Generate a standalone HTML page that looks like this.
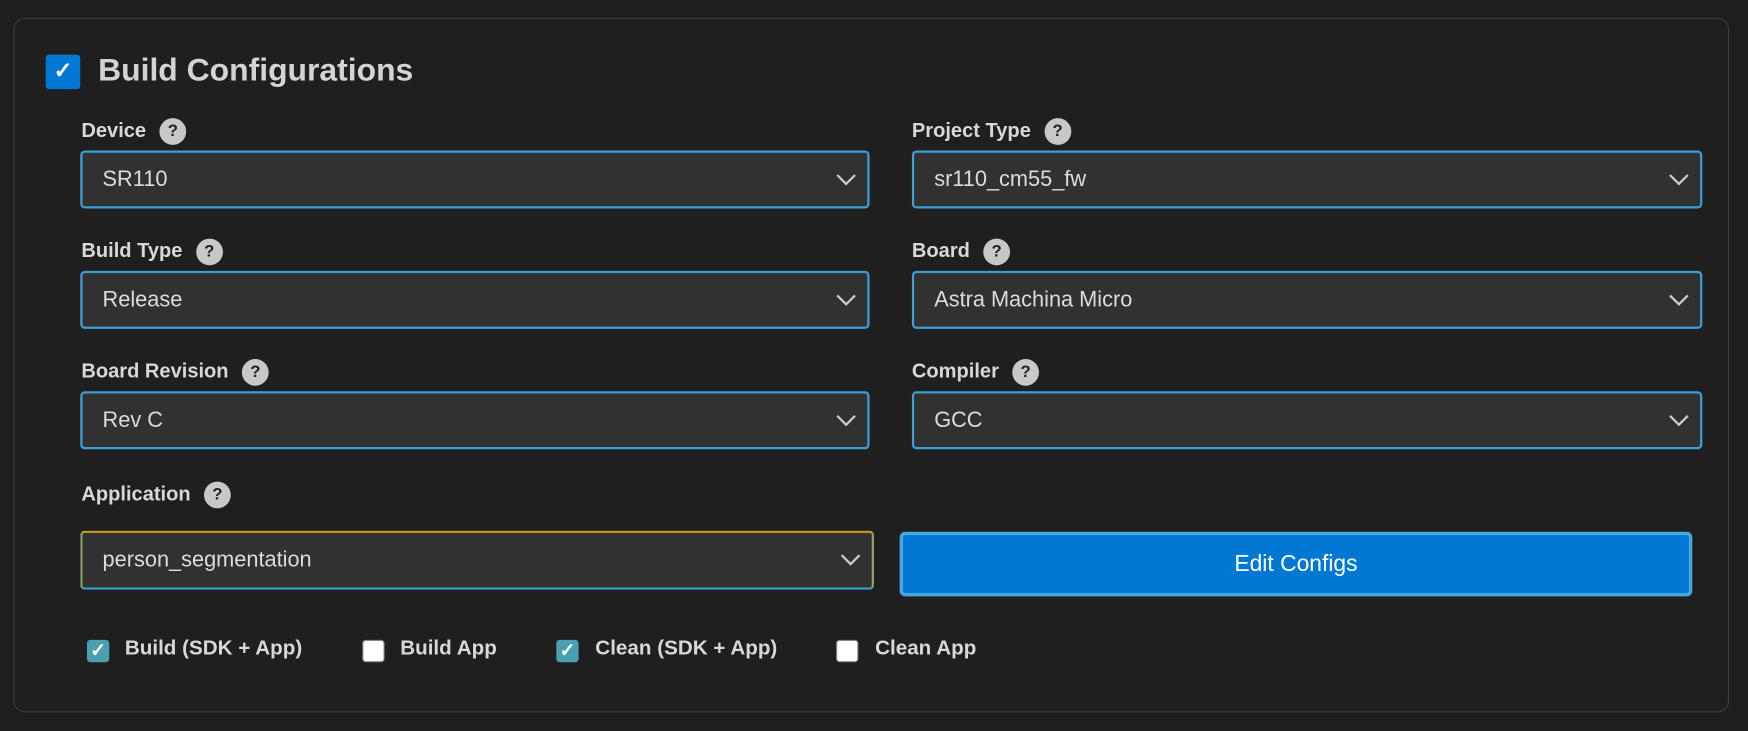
<!DOCTYPE html>
<html><head><style>
body{margin:0;width:1748px;height:731px;background:#1e1e1e;font-family:"Liberation Sans",sans-serif;overflow:hidden;position:relative}
#w{position:absolute;left:0;top:0;width:1568px;height:656px;transform:scale(1.1148);transform-origin:0 0}
.panel{position:absolute;left:12px;top:16px;width:1537px;height:621px;border:1px solid #3c3c3c;border-radius:10px;background:#1f1f1f}
.abs{position:absolute}
.title{left:88px;top:47px;font-size:28.6px;line-height:32px;font-weight:bold;color:#d4d4d4}
.tcb{left:41px;top:49px;width:31px;height:31px;background:#0078d4;border-radius:3px;color:#fff;font-size:20px;font-weight:bold;text-align:center;line-height:31px}
.lbl{font-size:18px;font-weight:bold;color:#d8d8d8}
.q{display:inline-block;width:24px;height:24px;border-radius:50%;background:#c8c8c8;color:#222;font-size:15px;font-weight:bold;text-align:center;line-height:24px;margin-left:12px;vertical-align:middle}
.sel{box-sizing:border-box;height:52px;border:2px solid #3ca0d8;border-radius:4px;background:#313131;color:#dcdcdc;font-size:19.5px;padding-left:18px;line-height:48px}
.sel svg{position:absolute;right:10px;top:18px}
.btn{left:807px;top:477px;width:711px;height:58px;box-sizing:border-box;background:#0078d4;border:3px solid #4aa8dc;border-radius:5px;color:#fff;font-size:20.5px;text-align:center;line-height:52px}
.cb{width:20px;height:20px;border-radius:3px;box-sizing:border-box}
.cbl{font-size:18.5px;font-weight:bold;color:#d8d8d8}
</style></head><body><div id="w">
<div class="panel"></div>
<div class="abs tcb">✓</div>
<div class="abs title">Build Configurations</div>

<div class="abs lbl" style="left:73px;top:106px">Device<span class="q">?</span></div>
<div class="abs sel" style="left:72px;top:135px;width:708px">SR110<svg width="18" height="12"><path d="M1 2 L9 10 L17 2" stroke="#ccc" stroke-width="2" fill="none"/></svg></div>
<div class="abs lbl" style="left:818px;top:106px">Project Type<span class="q">?</span></div>
<div class="abs sel" style="left:818px;top:135px;width:709px">sr110_cm55_fw<svg width="18" height="12"><path d="M1 2 L9 10 L17 2" stroke="#ccc" stroke-width="2" fill="none"/></svg></div>

<div class="abs lbl" style="left:73px;top:214px">Build Type<span class="q">?</span></div>
<div class="abs sel" style="left:72px;top:243px;width:708px">Release<svg width="18" height="12"><path d="M1 2 L9 10 L17 2" stroke="#ccc" stroke-width="2" fill="none"/></svg></div>
<div class="abs lbl" style="left:818px;top:214px">Board<span class="q">?</span></div>
<div class="abs sel" style="left:818px;top:243px;width:709px">Astra Machina Micro<svg width="18" height="12"><path d="M1 2 L9 10 L17 2" stroke="#ccc" stroke-width="2" fill="none"/></svg></div>

<div class="abs lbl" style="left:73px;top:322px">Board Revision<span class="q">?</span></div>
<div class="abs sel" style="left:72px;top:351px;width:708px">Rev C<svg width="18" height="12"><path d="M1 2 L9 10 L17 2" stroke="#ccc" stroke-width="2" fill="none"/></svg></div>
<div class="abs lbl" style="left:818px;top:322px">Compiler<span class="q">?</span></div>
<div class="abs sel" style="left:818px;top:351px;width:709px">GCC<svg width="18" height="12"><path d="M1 2 L9 10 L17 2" stroke="#ccc" stroke-width="2" fill="none"/></svg></div>

<div class="abs lbl" style="left:73px;top:432px">Application<span class="q">?</span></div>
<div class="abs sel" style="left:72px;top:476px;width:712px;height:53px;border-top-color:#c89a2a;border-left-color:#8aa06a;border-right-color:#8aa06a">person_segmentation<svg width="18" height="12"><path d="M1 2 L9 10 L17 2" stroke="#ccc" stroke-width="2" fill="none"/></svg></div>
<div class="abs btn">Edit Configs</div>

<div class="abs cb" style="left:78px;top:574px;background:#4a9fb0;color:#fff;font-size:17px;font-weight:bold;text-align:center;line-height:20px">✓</div>
<div class="abs cbl" style="left:112px;top:570px">Build (SDK + App)</div>
<div class="abs cb" style="left:325px;top:574px;background:#fff;border:1px solid #888"></div>
<div class="abs cbl" style="left:359px;top:570px">Build App</div>
<div class="abs cb" style="left:499px;top:574px;background:#4a9fb0;color:#fff;font-size:17px;font-weight:bold;text-align:center;line-height:20px">✓</div>
<div class="abs cbl" style="left:534px;top:570px">Clean (SDK + App)</div>
<div class="abs cb" style="left:750px;top:574px;background:#fff;border:1px solid #888"></div>
<div class="abs cbl" style="left:785px;top:570px">Clean App</div>
</div></body></html>
